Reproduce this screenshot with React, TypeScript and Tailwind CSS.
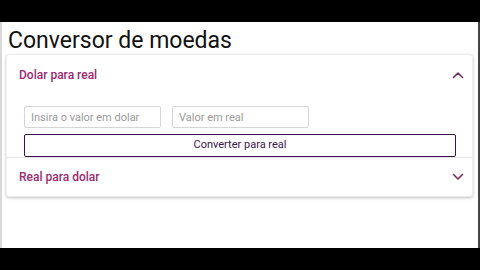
import React, { useState } from 'react';

const Chevron = ({ up }: { up: boolean }) => (
  <svg width="12" height="8" viewBox="0 0 12 8" fill="none" className="text-[#7b2d63]">
    <path d={up ? 'M1.5 6.5 L6 2 L10.5 6.5' : 'M1.5 1.5 L6 6 L10.5 1.5'} stroke="currentColor" strokeWidth="1.6" strokeLinecap="round" strokeLinejoin="round" />
  </svg>
);

export default function App() {
  const [open, setOpen] = useState<'dolar' | 'real' | null>('dolar');

  return (
    <div className="w-[480px] h-[270px] bg-black flex flex-col font-['Roboto','Liberation_Sans',sans-serif]">
      <div className="h-[22px] flex-shrink-0" />
      <main className="flex-1 bg-white border-l-2 border-l-[#d8d8d8] border-r-2 border-r-[#444] flex flex-col">
        <h1 className="text-[23px] leading-[27px] text-[#111] pl-[6px] pt-[5px]">Conversor de moedas</h1>

        <div className="ml-[4px] w-[467px] bg-white rounded-[3px] shadow-[0_1px_3px_rgba(0,0,0,0.25)] border border-[#eee]">
          {/* Dolar para real */}
          <div className="border-b border-[#e5e5e5]">
            <button
              onClick={() => setOpen(open === 'dolar' ? null : 'dolar')}
              className="w-full h-[40px] flex items-center justify-between pl-[12px] pr-[8px]"
            >
              <span className="text-[12px] font-medium text-[#9b2a6f]">Dolar para real</span>
              <Chevron up={open === 'dolar'} />
            </button>
            {open === 'dolar' && (
              <div className="pl-[17px] pr-[16px] pt-[11px]">
                <div className="flex gap-[11px]">
                  <input
                    placeholder="Insira o valor em dolar"
                    className="w-[137px] h-[22px] border border-[#d6d6d6] rounded-[2px] px-[6px] text-[11px] text-[#333] placeholder:text-[#9a9a9a] outline-none"
                  />
                  <input
                    placeholder="Valor em real"
                    className="w-[137px] h-[22px] border border-[#d6d6d6] rounded-[2px] px-[6px] text-[11px] text-[#333] placeholder:text-[#9a9a9a] outline-none"
                  />
                </div>
                <button className="mt-[6px] w-full h-[23px] border-[1.5px] border-[#3a0f4c] rounded-[2px] text-[11px] text-[#3b1650] bg-white">
                  Converter para real
                </button>
              </div>
            )}
          </div>

          {/* Real para dolar */}
          <button
            onClick={() => setOpen(open === 'real' ? null : 'real')}
            className="w-full h-[38px] flex items-center justify-between pl-[12px] pr-[8px]"
          >
            <span className="text-[12px] font-medium text-[#9b2a6f]">Real para dolar</span>
            <Chevron up={open === 'real'} />
          </button>
        </div>
      </main>
      <div className="h-[22px] flex-shrink-0" />
    </div>
  );
}
